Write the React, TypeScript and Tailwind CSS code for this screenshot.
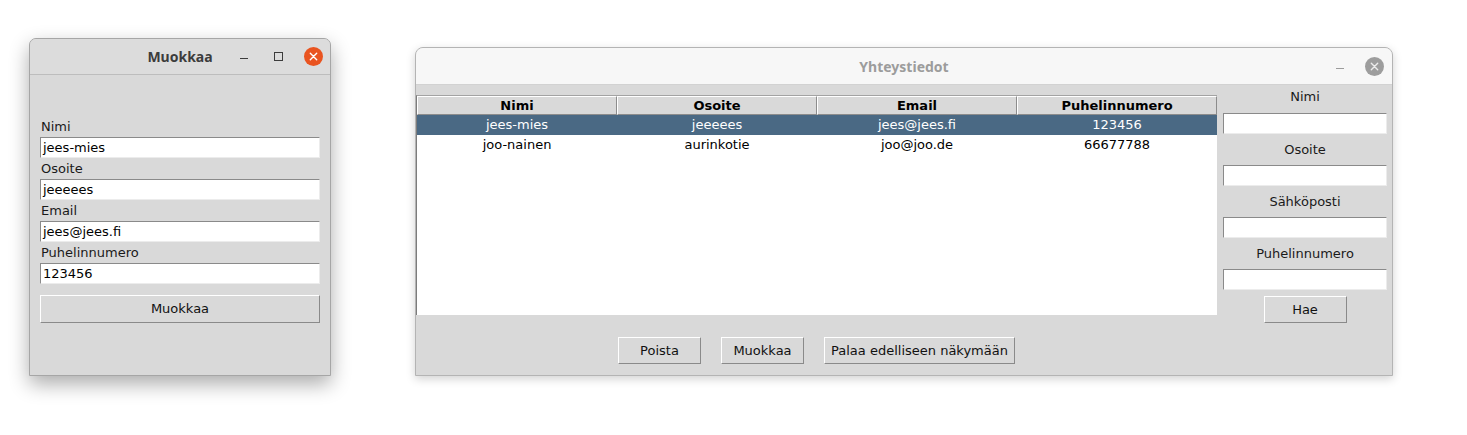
import React from 'react';

const sunken = 'h-[21px] border border-t-[#8a8a8a] border-l-[#8a8a8a] border-b-[#ececec] border-r-[#ececec] bg-white px-[2px] leading-[19px] text-black';
const raised = 'flex items-center justify-center border border-t-white border-l-white border-b-[#8a8a8a] border-r-[#8a8a8a] bg-[#d9d9d9] text-[#111]';

const CloseIcon: React.FC<{ bg: string; stroke: string }> = ({ bg, stroke }) => (
  <svg width="19" height="19" viewBox="0 0 19 19">
    <circle cx="9.5" cy="9.5" r="9.5" fill={bg} />
    <path d="M6.3 6.3 L12.7 12.7 M12.7 6.3 L6.3 12.7" stroke={stroke} strokeWidth="1.4" strokeLinecap="round" />
  </svg>
);

const EditWindow: React.FC = () => {
  const fields = [
    { label: 'Nimi', value: 'jees-mies' },
    { label: 'Osoite', value: 'jeeeees' },
    { label: 'Email', value: 'jees@jees.fi' },
    { label: 'Puhelinnumero', value: '123456' },
  ];

  return (
    <div className="mt-[38px] w-[302px] h-[338px] flex flex-col bg-[#d9d9d9] border border-[#a6a6a6] rounded-t-[7px] overflow-hidden shadow-[0_8px_20px_rgba(0,0,0,0.33)]">
      <div className="h-[36px] shrink-0 grid grid-cols-[1fr_auto_1fr] items-center bg-[#dcdcdc] border-b border-[#bdbdbd]">
        <div />
        <span className="font-['Noto_Sans'] font-bold text-[14px] text-[#3c3c3c]">Muokkaa</span>
        <div className="flex items-center justify-end pr-[7px]">
          <div className="w-[8px] h-[1px] bg-[#3c3c3c] mt-[4px]" />
          <div className="ml-[26px] w-[9px] h-[9px] border border-[#3c3c3c]" />
          <div className="ml-[21px]">
            <CloseIcon bg="#e95420" stroke="#ffffff" />
          </div>
        </div>
      </div>
      <div className="flex flex-col px-[10px] pt-[41px]">
        {fields.map((f) => (
          <React.Fragment key={f.label}>
            <div className="h-[21px] leading-[21px] pl-[1px] text-[#1a1a1a]">{f.label}</div>
            <div className={sunken}>{f.value}</div>
          </React.Fragment>
        ))}
        <div className={`${raised} mt-[11px] h-[28px]`}>Muokkaa</div>
      </div>
    </div>
  );
};

const ContactsWindow: React.FC = () => {
  const columns = ['Nimi', 'Osoite', 'Email', 'Puhelinnumero'];
  const rows = [
    { cells: ['jees-mies', 'jeeeees', 'jees@jees.fi', '123456'], selected: true },
    { cells: ['joo-nainen', 'aurinkotie', 'joo@joo.de', '66677788'], selected: false },
  ];
  const search = ['Nimi', 'Osoite', 'Sähköposti', 'Puhelinnumero'];

  return (
    <div className="mt-[47px] ml-[84px] w-[978px] h-[329px] flex flex-col bg-[#d9d9d9] border border-[#b4b4b4] rounded-t-[8px] overflow-hidden shadow-[0_3px_10px_rgba(0,0,0,0.18)]">
      <div className="h-[37px] shrink-0 grid grid-cols-[1fr_auto_1fr] items-center bg-[#f7f7f7] border-b border-[#d2d2d2]">
        <div />
        <span className="font-['Noto_Sans'] font-bold text-[14px] text-[#9c9c9c]">Yhteystiedot</span>
        <div className="flex items-center justify-end pr-[8px]">
          <div className="w-[8px] h-[1px] bg-[#9c9c9c] mt-[4px]" />
          <div className="ml-[21px]">
            <CloseIcon bg="#9d9d9d" stroke="#ececec" />
          </div>
        </div>
      </div>
      <div className="flex flex-1">
        <div className="w-[801px] flex flex-col">
          <div className="mt-[10px] h-[220px] flex flex-col bg-white border-l border-t border-l-[#7c7c7c] border-t-[#a3a3a3]">
            <div className="flex h-[19px]">
              {columns.map((c) => (
                <div
                  key={c}
                  className="w-[200px] flex items-center justify-center bg-[#d9d9d9] border-t border-l border-t-white border-l-white border-r border-b border-r-[#8c8c8c] border-b-[#8c8c8c] font-bold text-black"
                >
                  {c}
                </div>
              ))}
            </div>
            {rows.map((r) => (
              <div key={r.cells[0]} className={`flex h-[20px] ${r.selected ? 'bg-[#4a6984] text-white' : 'bg-white text-black'}`}>
                {r.cells.map((v, i) => (
                  <div key={i} className="w-[200px] flex items-center justify-center">
                    {v}
                  </div>
                ))}
              </div>
            ))}
          </div>
          <div className="flex justify-center gap-[20px] pt-[22px]">
            <div className={`${raised} w-[83px] h-[27px]`}>Poista</div>
            <div className={`${raised} w-[83px] h-[27px]`}>Muokkaa</div>
            <div className={`${raised} w-[191px] h-[27px]`}>Palaa edelliseen näkymään</div>
          </div>
        </div>
        <div className="w-[175px] flex flex-col pl-[6px] pr-[5px]">
          {search.map((s, i) => (
            <React.Fragment key={s}>
              <div className={`${i === 0 ? 'h-[28px] pb-[4px]' : 'h-[31px]'} flex items-center justify-center text-[#1a1a1a]`}>{s}</div>
              <div className={sunken} />
            </React.Fragment>
          ))}
          <div className="flex justify-center mt-[6px]">
            <div className={`${raised} w-[83px] h-[27px]`}>Hae</div>
          </div>
        </div>
      </div>
    </div>
  );
};

export default function App() {
  return (
    <div className="w-[1467px] h-[435px] bg-white flex items-start pl-[29px] font-['DejaVu_Sans',sans-serif] text-[13px]">
      <EditWindow />
      <ContactsWindow />
    </div>
  );
}
